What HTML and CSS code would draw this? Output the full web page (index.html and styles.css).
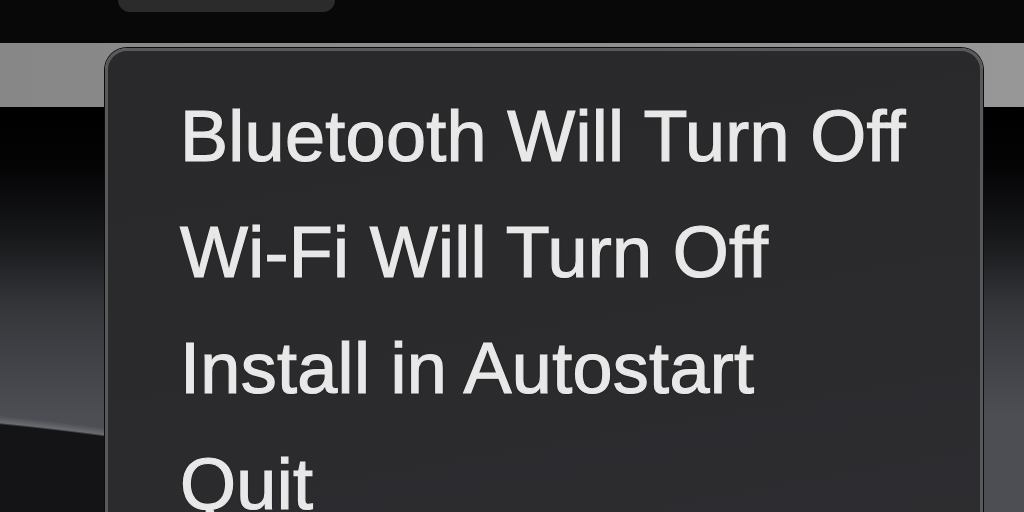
FILE: index.html
```html
<!DOCTYPE html>
<html lang="en">
<head>
    <meta charset="UTF-8">
    <meta name="viewport" content="width=device-width, initial-scale=1.0">
    <title>Status Menu</title>
    <link rel="stylesheet" href="styles.css">
</head>
<body>
    <div class="screen">
        <div class="menubar">
            <div class="menubar-pill"></div>
        </div>
        <div class="desktop">
            <div class="window-strip"></div>
            <div class="wallpaper"></div>
        </div>

        <!-- dropdown from the status item -->
        <div class="menu">
            <div class="menu-item">Bluetooth Will Turn Off</div>
            <div class="menu-item">Wi-Fi Will Turn Off</div>
            <div class="menu-item">Install in Autostart</div>
            <div class="menu-item">Quit</div>
        </div>
    </div>
</body>
</html>
```

FILE: styles.css
```css
html, body {
    margin: 0;
    padding: 0;
    background: #000;
}
.screen {
    position: relative;
    width: 1024px;
    height: 512px;
    overflow: hidden;
    background: #000;
    font-family: 'Liberation Sans', Arial, sans-serif;
}
.menubar {
    height: 43px;
    background: #080808;
}
.menubar-pill {
    margin-left: 118px;
    width: 217px;
    height: 12px;
    background: #2b2b2b;
    border-radius: 0 0 14px 14px;
}
.desktop {
    display: flex;
    flex-direction: column;
    height: 469px;
}
.window-strip {
    height: 64px;
    background: linear-gradient(90deg, #878787, #8f8f8f 60%, #979797);
}
.wallpaper {
    flex: 1;
    background:
        radial-gradient(circle 3072px at -300px 3372px, #141416 3069px, #6a6c72 3071px, rgba(80, 82, 88, 0) 3078px),
        linear-gradient(180deg, #000 0px, #040405 60px, #17181a 130px, #34363a 200px, #4c4e54 310px),
        #000;
}
.menu {
    position: absolute;
    left: 105px;
    top: 48px;
    width: 872px;
    height: 520px;
    padding-top: 27px;
    border: 3px solid #59595b;
    border-radius: 22px;
    box-shadow: 0 0 0 1px #0c0c0c;
    background: linear-gradient(170deg, #29292b, #2b2b2e 60%, #2e2e32);
}
.menu-item {
    padding-left: 72px;
    font-size: 72px;
    line-height: 116px;
    letter-spacing: 0.3px;
    color: #e8e8e8;
    -webkit-text-stroke: 1.2px #e8e8e8;
    text-shadow: 0 0 2px #000;
    white-space: nowrap;
}
```
